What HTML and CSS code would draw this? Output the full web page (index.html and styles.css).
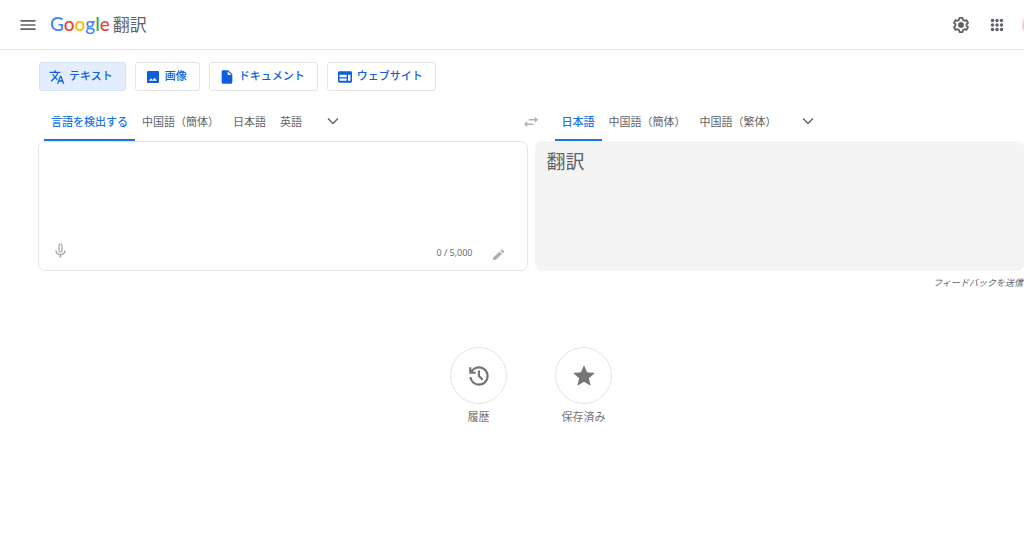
FILE: index.html
```html
<!DOCTYPE html>
<html lang="ja">
<head>
<meta charset="utf-8">
<meta name="viewport" content="width=device-width, initial-scale=1">
<title>Google 翻訳</title>
<link rel="stylesheet" href="styles.css">
</head>
<body>
<header class="topbar">
  <button class="icon-btn" type="button" aria-label="メインメニュー">
    <svg class="icon-menu" viewBox="0 0 24 24"><path d="M3 18h18v-2H3v2zm0-5h18v-2H3v2zm0-7v2h18V6H3z"/></svg>
  </button>
  <a class="brand" href="#"><span class="logo"><span class="blue">G</span><span class="red">o</span><span class="yellow">o</span><span class="blue">g</span><span class="green">l</span><span class="red">e</span></span><span class="product">翻訳</span></a>
  <div class="tools">
    <button class="icon-btn" type="button" aria-label="設定">
      <svg class="icon-tool" viewBox="0 0 24 24"><path fill="none" stroke="currentColor" stroke-width="2.4" stroke-linejoin="round" d="M10 2.500h4l.7 2.700 2 1.200 2.700-.8 2 3.500-2 1.900v2l2 1.900-2 3.500-2.700-.8-2 1.200-.7 2.700h-4l-.7-2.700-2-1.200-2.700.8-2-3.500 2-1.900v-2l-2-1.900 2-3.500 2.700.8 2-1.200z"/><circle cx="12" cy="12" r="3.900"/></svg>
    </button>
    <button class="icon-btn" type="button" aria-label="Google アプリ">
      <svg class="icon-tool" viewBox="0 0 24 24"><circle cx="6" cy="6" r="2.300"/><circle cx="12" cy="6" r="2.300"/><circle cx="18" cy="6" r="2.300"/><circle cx="6" cy="12" r="2.300"/><circle cx="12" cy="12" r="2.300"/><circle cx="18" cy="12" r="2.300"/><circle cx="6" cy="18" r="2.300"/><circle cx="12" cy="18" r="2.300"/><circle cx="18" cy="18" r="2.300"/></svg>
    </button>
  </div>
  <button class="avatar" type="button" aria-label="アカウント"></button>
</header>

<main class="page">
  <nav class="modes" aria-label="翻訳の種類">
    <button class="mode active" type="button"><svg viewBox="0 0 24 24"><path d="M12.870 15.070l-2.540-2.510.030-.030c1.740-1.940 2.980-4.170 3.710-6.530H17V4h-7V2H8v2H1v1.990h11.170C11.500 7.920 10.440 9.750 9 11.350 8.070 10.320 7.300 9.190 6.690 8h-2c.730 1.630 1.730 3.170 2.980 4.560l-5.090 5.020L4 19l5-5 3.110 3.110.760-2.040zM18.500 10h-2L12 22h2l1.120-3h4.750L21 22h2l-4.500-12zm-2.620 7l1.620-4.330L19.120 17h-3.240z"/></svg>テキスト</button>
    <button class="mode" type="button"><svg viewBox="0 0 24 24"><path d="M21 19V5c0-1.100-.9-2-2-2H5c-1.100 0-2 .9-2 2v14c0 1.100.9 2 2 2h14c1.100 0 2-.9 2-2zM9 14l2.500 2.500L14.500 13l3.500 4.500H6z"/></svg>画像</button>
    <button class="mode" type="button"><svg viewBox="0 0 24 24"><path d="M6 2c-1.100 0-1.990.9-1.990 2L4 20c0 1.100.890 2 1.990 2H18c1.100 0 2-.9 2-2V8l-6-6H6zm7 7V3.500L18.500 9H13z"/></svg>ドキュメント</button>
    <button class="mode" type="button"><svg viewBox="0 0 24 24"><path fill-rule="evenodd" d="M3.500 3.500h17A2 2 0 0 1 22.500 5.500v13a2 2 0 0 1-2 2h-17a2 2 0 0 1-2-2v-13a2 2 0 0 1 2-2zM3.800 8.800v3.500h10.700V8.800zM3.800 14.300v3.500h10.700v-3.500zM16.500 8.800v9h3.700v-9z"/></svg>ウェブサイト</button>
  </nav>

  <div class="translator">
    <div class="langs source-langs">
      <button class="lang active" type="button">言語を検出する</button>
      <button class="lang" type="button">中国語（簡体）</button>
      <button class="lang" type="button">日本語</button>
      <button class="lang" type="button">英語</button>
      <button class="more" type="button" aria-label="他の原文の言語"><svg viewBox="0 0 24 24"><path d="M5.400 7.500 12 14.200l6.600-6.700L20.200 9 12 17.200 3.800 9z"/></svg></button>
      <button class="swap" type="button" aria-label="言語を入れ替える"><svg viewBox="0 0 24 24"><path d="M7 11l-4.500 4L7 19v-3h8v-2H7v-3zM21.500 9L17 5v3H9v2h8v3l4.500-4z"/></svg></button>
    </div>
    <div class="langs target-langs">
      <button class="lang active" type="button">日本語</button>
      <button class="lang" type="button">中国語（簡体）</button>
      <button class="lang" type="button">中国語（繁体）</button>
      <button class="more" type="button" aria-label="他の訳文の言語"><svg viewBox="0 0 24 24"><path d="M5.400 7.500 12 14.200l6.600-6.700L20.200 9 12 17.200 3.800 9z"/></svg></button>
    </div>
    <section class="panel source">
      <textarea class="entry" aria-label="原文"></textarea>
      <div class="panel-foot">
        <button class="icon-btn faint" type="button" aria-label="音声入力"><svg class="icon-mic" viewBox="0 0 24 24"><path d="M12 15c1.660 0 3-1.310 3-2.970V5c0-1.660-1.340-3-3-3S9 3.340 9 5v7.030C9 13.690 10.340 15 12 15zm-1.200-10.100c0-.660.540-1.200 1.200-1.200s1.200.540 1.200 1.200v7.200c0 .660-.540 1.200-1.200 1.200s-1.200-.540-1.200-1.200V4.900zM17.300 12c0 3-2.540 5.100-5.300 5.100S6.700 15 6.700 12H4.500c0 3.410 2.720 6.230 6.300 6.720V22h2.400v-3.280c3.580-.480 6.300-3.300 6.300-6.720h-2.200z"/></svg></button>
        <span class="count">0 / 5,000</span>
        <button class="icon-btn pencil" type="button" aria-label="入力ツール"><svg class="icon-pen" viewBox="0 0 24 24"><path d="M2 17.500V22h4.500L18.500 11 14 6.500zM22.200 8a1.500 1.500 0 0 0 0-2.100l-2.600-2.600a1.500 1.500 0 0 0-2.100 0l-2 1.900L20 9.800z"/></svg></button>
      </div>
    </section>
    <section class="panel target">翻訳</section>
  </div>
  <a class="feedback" href="#">フィードバックを送信</a>

  <nav class="shortcuts" aria-label="ショートカット">
    <a class="shortcut" href="#"><span class="disc"><svg viewBox="0 0 24 24"><path d="M11.950 21q-3.450 0-6.010-2.290T3 13h2.050q.350 2.600 2.310 4.300T11.950 19q2.930 0 4.960-2.040T18.950 12t-2.040-4.960T11.950 5q-1.720 0-3.220.800T6.200 8h2.750v2h-6V4h2v2.350q1.270-1.600 3.110-2.480T11.950 3q1.880 0 3.510.710t2.850 1.930 1.930 2.850.710 3.510-.710 3.510-1.930 2.850-2.850 1.930T11.950 21zm2.800-4.800L10.950 12.400V7h2v4.600l3.200 3.200z"/></svg></span>履歴</a>
    <a class="shortcut" href="#"><span class="disc"><svg viewBox="0 0 24 24"><path d="M12 17.270L18.180 21l-1.640-7.030L22 9.240l-7.190-.610L12 2 9.190 8.630 2 9.240l5.460 4.730L5.820 21z"/></svg></span>保存済み</a>
  </nav>
</main>
</body>
</html>
```
FILE: styles.css
```css
* {
  box-sizing: border-box;
}

body {
  margin: 0;
  background: #fff;
  color: #5f6368;
  font: 11px/16px Roboto, "Noto Sans CJK JP", sans-serif;
  overflow-x: hidden;
}

button {
  margin: 0;
  padding: 0;
  border: 0;
  background: none;
  color: inherit;
  font: inherit;
  cursor: pointer;
}

a {
  color: inherit;
  text-decoration: none;
}

svg {
  display: block;
  fill: currentColor;
}

.topbar {
  display: flex;
  align-items: center;
  height: 50px;
  padding-left: 18px;
  border-bottom: 1px solid #e4e5e7;
  overflow: hidden;
}

.icon-btn {
  display: flex;
}

.icon-menu {
  width: 20px;
  height: 20px;
}

.brand {
  display: flex;
  align-items: center;
  gap: 3px;
  margin-left: 12px;
}

.logo {
  padding-bottom: 2px;
  font: 500 19px/24px Lato, sans-serif;
}

.blue { color: #4285f4; }
.red { color: #ea4335; }
.yellow { color: #fbbc05; }
.green { color: #34a853; }

.product {
  font-size: 17px;
  line-height: 24px;
}

.tools {
  display: flex;
  gap: 18px;
  margin-left: auto;
}

.icon-tool {
  width: 18px;
  height: 18px;
}

.avatar {
  flex: none;
  width: 24px;
  height: 24px;
  margin: 0 -22px 0 16px;
  border-radius: 50%;
  background: #fcc8ce;
}

.page {
  padding: 12px 0 0 38px;
}

.modes {
  display: flex;
  gap: 9px;
  padding-left: 1px;
}

.mode {
  display: flex;
  align-items: center;
  gap: 4px;
  height: 29px;
  padding: 0 12px 0 9px;
  border: 1px solid #e2e4e8;
  border-radius: 3px;
  color: #0b5fe0;
  font-weight: 500;
}

.mode svg {
  width: 16px;
  height: 16px;
}

.mode.active {
  border-color: #d5e1f7;
  background: #e4edfe;
}

.translator {
  display: grid;
  grid-template-columns: 1fr 1fr;
  column-gap: 7px;
  margin-top: 10px;
}

.langs {
  position: relative;
  display: flex;
  height: 40px;
}

.source-langs {
  padding-left: 6px;
}

.target-langs {
  padding-left: 20px;
}

.lang {
  padding: 5px 7px 0;
  border-bottom: 2px solid transparent;
  white-space: nowrap;
}

.lang.active {
  border-color: #1a73e8;
  color: #1a73e8;
  font-weight: 500;
}

.more {
  display: flex;
  align-items: center;
  margin-left: 16px;
}

.more svg {
  width: 16px;
  height: 16px;
}

.swap {
  position: absolute;
  right: -12px;
  top: 12px;
  color: #b0b2b5;
}

.swap svg {
  width: 18px;
  height: 18px;
}

.panel {
  min-height: 130px;
  border-radius: 7px;
}

.source {
  display: flex;
  flex-direction: column;
  border: 1px solid #e6e6e6;
}

.entry {
  flex: 1;
  width: 100%;
  padding: 8px 12px;
  border: 0;
  outline: 0;
  background: none;
  color: inherit;
  font: inherit;
  font-size: 18px;
  resize: none;
}

.panel-foot {
  display: flex;
  align-items: center;
  padding: 0 22px 7px 13px;
}

.faint {
  padding-bottom: 4px;
  color: #a8aaad;
}

.icon-mic {
  width: 17px;
  height: 17px;
}

.count {
  margin-left: auto;
  font: 9px/16px "Open Sans", sans-serif;
}

.pencil {
  margin-left: 19px;
  padding-top: 4px;
  color: #b0b0b0;
}

.icon-pen {
  width: 13px;
  height: 13px;
}

.target {
  padding: 9px 12px;
  background: #f4f4f4;
  font-size: 19px;
  line-height: 26px;
}

.feedback {
  display: block;
  margin-top: 5px;
  padding-right: 1px;
  font-size: 9px;
  font-style: italic;
  line-height: 15px;
  text-align: right;
}

.shortcuts {
  display: flex;
  justify-content: center;
  gap: 48px;
  margin-top: 56px;
}

.shortcut {
  display: flex;
  flex-direction: column;
  align-items: center;
  gap: 6px;
  color: #757575;
}

.disc {
  display: grid;
  place-items: center;
  width: 57px;
  height: 57px;
  border: 1px solid #e4e4e4;
  border-radius: 50%;
}

.disc svg {
  width: 26px;
  height: 26px;
}
```
